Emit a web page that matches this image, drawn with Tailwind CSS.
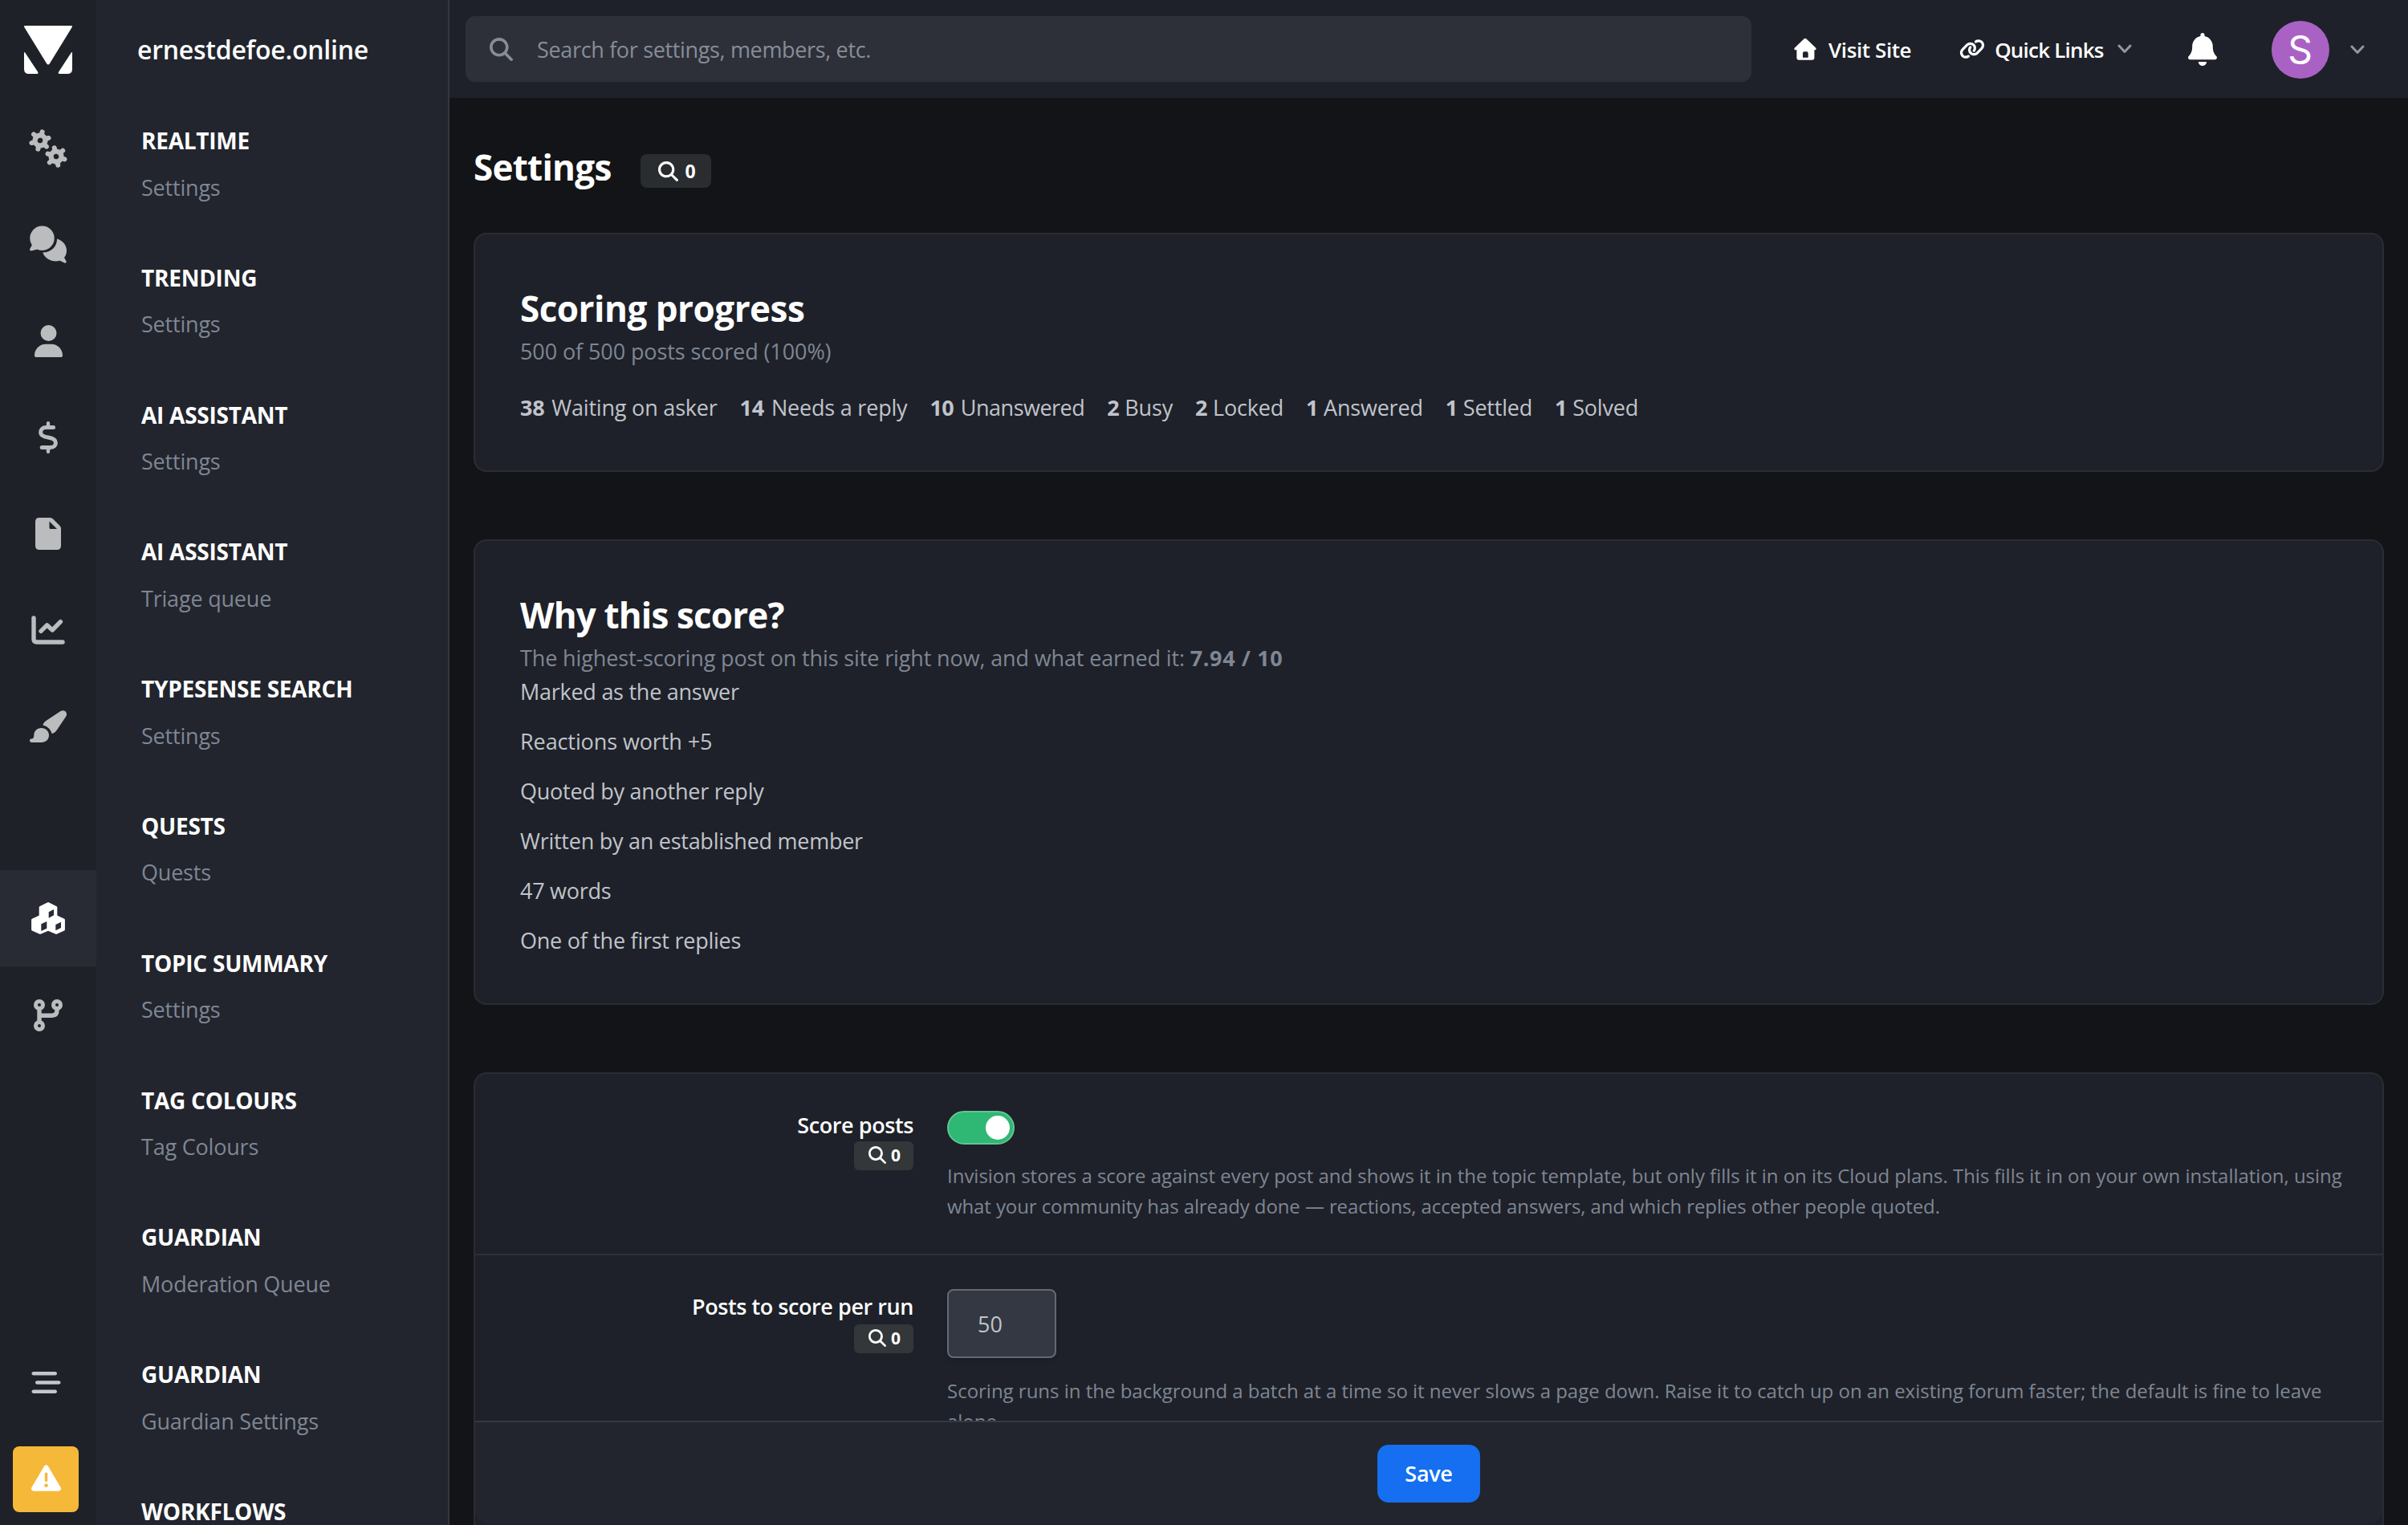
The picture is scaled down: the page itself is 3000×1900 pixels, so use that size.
<!DOCTYPE html>
<html lang="en">

<head>
    <meta charset="UTF-8">
    <meta name="viewport" content="width=device-width, initial-scale=1.0">
    <title>Settings - ernestdefoe.online</title>
    <script src="https://cdn.jsdelivr.net/npm/@tailwindcss/browser@4"></script>
</head>

<body class="bg-[#131417] font-['Open_Sans','Noto_Sans',sans-serif] text-[27px] leading-[42px] text-[#c0c4cb]">
    <!-- Shared icons -->
    <svg class="hidden" xmlns="http://www.w3.org/2000/svg">
        <symbol id="icon-search" viewBox="0 0 512 512">
            <path d="M416 208c0 45.9-14.9 88.3-40 122.7L502.6 457.4c12.5 12.5 12.5 32.8 0 45.3s-32.8 12.5-45.3 0L330.7 376c-34.4 25.2-76.8 40-122.7 40C93.1 416 0 322.9 0 208S93.1 0 208 0S416 93.1 416 208zM208 352a144 144 0 1 0 0-288 144 144 0 1 0 0 288z" />
        </symbol>
        <symbol id="icon-chevron" viewBox="0 0 18 12">
            <path d="M2 2l7 7.5L16 2" fill="none" stroke="currentColor" stroke-width="3" stroke-linecap="round" stroke-linejoin="round" />
        </symbol>
    </svg>

    <div class="flex h-[1900px] w-[3000px] overflow-hidden">
        <!-- Icon rail -->
        <nav class="flex w-[120px] shrink-0 flex-col bg-[#1e2128] text-[#bbbcbe]">
            <a href="#" class="flex h-[124px] shrink-0 items-center justify-center">
                <svg class="h-[60px] w-[60px]" viewBox="0 0 60 60" fill="#fff">
                    <path d="M1.2 0h57.6q1.6 0 1 1.8L32 47q-2 3-4 0L.2 1.8Q-.4 0 1.2 0z" />
                    <path d="M0 34q0-2 1.2-.4L17.4 58q.6 2-1 2H6q-6 0-6-6zM60 34q0-2-1.2-.4L42.8 58q-.6 2 1 2H54q6 0 6-6z" />
                </svg>
            </a>
            <a href="#" class="flex h-[120px] shrink-0 items-center justify-center pt-0.5">
                <svg class="h-[48px] w-[48px]" viewBox="0 0 48 48" fill="currentColor" stroke="currentColor" stroke-linecap="round">
                    <g transform="translate(14 14) rotate(14)">
                        <circle r="9.6" stroke="none" />
                        <path d="M0-11V11" stroke-width="6" />
                        <path d="M0-11V11" stroke-width="6" transform="rotate(60)" />
                        <path d="M0-11V11" stroke-width="6" transform="rotate(120)" />
                        <circle r="3.3" fill="#1e2128" stroke="none" />
                    </g>
                    <g transform="translate(34 34) rotate(-12)">
                        <circle r="9.6" stroke="none" />
                        <path d="M0-11V11" stroke-width="6" />
                        <path d="M0-11V11" stroke-width="6" transform="rotate(60)" />
                        <path d="M0-11V11" stroke-width="6" transform="rotate(120)" />
                        <circle r="3.3" fill="#1e2128" stroke="none" />
                    </g>
                </svg>
            </a>
            <a href="#" class="flex h-[120px] shrink-0 items-center justify-center pt-0.5">
                <svg class="h-[48px] w-[48px]" viewBox="0 0 48 48" fill="currentColor">
                    <circle cx="16.5" cy="15.8" r="15.2" />
                    <path d="M4.2 23.5L1.2 29.2Q.8 31.8 3.2 31.4L13 29z" />
                    <path d="M35 16.5C42 18.5 47 24.5 47 31c0 3.5-1 6.500-3 9l2.700 4.800q.3 2.200-1.900 1.900L38.500 43.800C30 46.500 20 41.800 17.200 33.500 27 33.800 35.300 26.500 35 16.500z" />
                </svg>
            </a>
            <a href="#" class="flex h-[120px] shrink-0 items-center justify-center pt-0.5">
                <svg class="h-[40px] w-[35px]" viewBox="0 0 448 512" fill="currentColor">
                    <path d="M224 256A128 128 0 1 0 224 0a128 128 0 1 0 0 256zm-45.700 48C79.800 304 0 383.800 0 482.300C0 498.700 13.300 512 29.700 512H418.300c16.400 0 29.700-13.300 29.700-29.700C448 383.800 368.200 304 269.700 304H178.300z" />
                </svg>
            </a>
            <a href="#" class="flex h-[120px] shrink-0 items-center justify-center pt-0.5">
                <svg class="h-[40px] w-[24px]" viewBox="0 0 24 40" fill="none" stroke="currentColor" stroke-linecap="round">
                    <path d="M12 2.300V7M12 33v4.700" stroke-width="4.400" />
                    <path d="M18.500 7.500H9.500C5.200 7.500 2.600 10.300 2.600 13.500c0 4.300 3.400 5.700 9.400 6.500 6.200.9 9.400 2.500 9.400 6.800 0 3.500-2.600 5.700-6.400 5.700H4.200" stroke-width="5" />
                </svg>
            </a>
            <a href="#" class="flex h-[120px] shrink-0 items-center justify-center pt-0.5">
                <svg class="h-[40px] w-[32px]" viewBox="0 0 32 40" fill="currentColor" fill-rule="evenodd">
                    <path d="M5 0H18.500q2 0 3.500 1.500L30.500 10Q32 11.500 32 13.500V35q0 5-5 5H5q-5 0-5-5V5Q0 0 5 0zM17.500 4.500v8q0 1.500 1.500 1.500h8z" />
                </svg>
            </a>
            <a href="#" class="flex h-[120px] shrink-0 items-center justify-center pt-0.5">
                <svg class="h-[36px] w-[42px]" viewBox="0 0 42 36" fill="none" stroke="currentColor" stroke-width="5.400" stroke-linecap="round" stroke-linejoin="round">
                    <path d="M3 3V29q0 4 4 4H39" />
                    <path d="M12 19.300L19.500 11.800 26.200 18 36.400 7.600" />
                </svg>
            </a>
            <a href="#" class="flex h-[120px] shrink-0 items-center justify-center pt-0.5">
                <svg class="h-[40px] w-[46px]" viewBox="0 0 46 40" fill="currentColor">
                    <path d="M38.500 1C42.500-1.500 48 2 45.300 7.500L33.500 25c-1.600 2.300-3.500 3.600-6 4C26.500 24.500 22.500 20 16.500 18.600c.3-2 1.500-3.800 3.500-5.300z" />
                    <path d="M14.500 22C20 22 24 26 24 31c0 5.200-4 9-9.300 9H2.500C-.8 40-.8 35.500 2 35.500c2.200 0 3.300-1.500 3.300-4.300C5.300 26 9 22 14.500 22z" />
                </svg>
            </a>
            <a href="#" class="mt-[120px] flex h-[120px] shrink-0 items-center justify-center bg-[#282b33] text-white">
                <svg class="h-[40px] w-[42px]" viewBox="0 0 42 40" fill="currentColor" stroke="currentColor" stroke-width="2.600" stroke-linejoin="round">
                    <path d="M21 1.500L31 6.500V18L21 22.500 11 18V6.500z" />
                    <path d="M11 17.500L20.500 22V34.500L11 38.600 1.400 34.200V22z" />
                    <path d="M31 17.500L40.600 22V34.200L31 38.600 21.500 34.500V22z" />
                    <path d="M21.700 12.300L28 9v7.300l-6.300 3.400zM12.300 27.300L19.300 24v8.700l-7 3.300zM30.300 28L37 24.700V32l-6.700 3.300z" fill="#282b33" stroke="none" />
                </svg>
            </a>
            <a href="#" class="flex h-[120px] shrink-0 items-center justify-center pt-0.5">
                <svg class="h-[40px] w-[36px]" viewBox="0 0 36 40" fill="none" stroke="currentColor" stroke-width="5">
                    <circle cx="7" cy="7" r="4.500" />
                    <circle cx="29" cy="7" r="4.500" />
                    <circle cx="7" cy="33" r="4.500" />
                    <path d="M7 11V29M7 20.200H22.500q6.500 0 6.500-6.500V11" stroke-width="5.400" />
                </svg>
            </a>
            <div class="mt-auto flex flex-col gap-[66px] pb-4 pl-4">
                <a href="#" class="pl-[23px]">
                    <svg class="h-[27px] w-[37px] text-[#c3c6cd]" viewBox="0 64 512 384" fill="currentColor">
                        <path d="M0 96C0 78.300 14.300 64 32 64H416c17.700 0 32 14.300 32 32s-14.300 32-32 32H32C14.300 128 0 113.700 0 96zM64 256c0-17.700 14.300-32 32-32H480c17.700 0 32 14.300 32 32s-14.300 32-32 32H96c-17.700 0-32-14.300-32-32zM448 416c0 17.700-14.300 32-32 32H32c-17.700 0-32-14.300-32-32s14.300-32 32-32H416c17.700 0 32 14.300 32 32z" />
                    </svg>
                </a>
                <button type="button" class="flex h-[82px] w-[82px] items-center justify-center rounded-lg bg-[#f5b839] pb-1 text-white">
                    <svg class="h-[37px] w-[37px]" viewBox="0 0 512 512" fill="currentColor">
                        <path d="M256 32c14.200 0 27.300 7.500 34.500 19.800l216 368c7.300 12.400 7.300 27.700 .2 40.100S486.300 480 472 480H40c-14.300 0-27.600-7.700-34.700-20.100s-7-27.800 .2-40.100l216-368C228.700 39.500 241.800 32 256 32zm0 128c-13.300 0-24 10.700-24 24V296c0 13.300 10.700 24 24 24s24-10.700 24-24V184c0-13.300-10.700-24-24-24zm32 224a32 32 0 1 0 -64 0 32 32 0 1 0 64 0z" />
                    </svg>
                </button>
            </div>
        </nav>

        <!-- Sub menu -->
        <aside class="flex w-[440px] shrink-0 flex-col border-r-2 border-[#33373e] bg-[#22252d]">
            <div class="flex h-[122px] shrink-0 items-center pt-0.5 pl-[51px] text-[32px] font-semibold tracking-[-0.25px] text-white">ernestdefoe.online</div>
            <ul class="flex flex-col gap-[74.3px] pt-[34px] pl-14 leading-[38px] tracking-[-0.2px] whitespace-nowrap text-[#7f8694] [&_h3]:mb-[20.5px] [&_h3]:text-[28px] [&_h3]:font-bold [&_h3]:tracking-[-0.25px] [&_h3]:text-white [&_h3]:uppercase">
                <li>
                    <h3>Realtime</h3>
                    <a href="#" class="block">Settings</a>
                </li>
                <li>
                    <h3>Trending</h3>
                    <a href="#" class="block">Settings</a>
                </li>
                <li>
                    <h3>AI Assistant</h3>
                    <a href="#" class="block">Settings</a>
                </li>
                <li>
                    <h3>AI Assistant</h3>
                    <a href="#" class="block">Triage queue</a>
                </li>
                <li>
                    <h3>Typesense Search</h3>
                    <a href="#" class="block">Settings</a>
                </li>
                <li>
                    <h3>Quests</h3>
                    <a href="#" class="block">Quests</a>
                </li>
                <li>
                    <h3>Topic Summary</h3>
                    <a href="#" class="block">Settings</a>
                </li>
                <li>
                    <h3>Tag Colours</h3>
                    <a href="#" class="block">Tag Colours</a>
                </li>
                <li>
                    <h3>Guardian</h3>
                    <a href="#" class="block">Moderation Queue</a>
                </li>
                <li>
                    <h3>Guardian</h3>
                    <a href="#" class="block">Guardian Settings</a>
                </li>
                <li>
                    <h3>Workflows</h3>
                </li>
            </ul>
        </aside>

        <div class="flex w-[2440px] flex-col">
            <!-- Top bar -->
            <header class="flex h-[122px] shrink-0 items-center bg-[#1e2129] pl-5 text-[26px] font-semibold whitespace-nowrap text-white">
                <div class="flex h-[82px] w-[1602px] items-center gap-[30px] rounded-xl bg-[#2d3039] pl-[30px] font-normal text-[#878d98]">
                    <svg class="h-[29px] w-[29px]" fill="currentColor"><use href="#icon-search" /></svg>
                    <span class="pt-0.5 text-[27px] tracking-[-0.34px]">Search for settings, members, etc.</span>
                </div>
                <a href="#" class="ml-[53px] flex items-center gap-[15px] tracking-[-0.4px]">
                    <svg class="h-[28px] w-[28px]" viewBox="0 0 28 28" fill="currentColor" fill-rule="evenodd">
                        <path d="M12.700 1.200q1.300-1 2.600 0L27 12.500q1.500 1.800-.3 2.700H25.400V25q0 2.800-2.800 2.800H6.200Q3.400 27.800 3.400 25V15.200H1.300Q-.5 14.300 1 12.500zM13 17.300q-2 0-2 2V24.700h6.700V19.300q0-2-2-2z" />
                    </svg>
                    <span class="pt-0.5">Visit Site</span>
                </a>
                <a href="#" class="ml-[60px] flex items-center tracking-[-0.8px]">
                    <svg class="mr-[12px] h-[26px] w-[32px]" viewBox="0 0 640 512" fill="currentColor">
                        <path d="M579.800 267.700c56.500-56.500 56.500-148 0-204.500c-50-50-128.800-56.500-186.300-15.400l-1.600 1.100c-14.400 10.300-17.700 30.300-7.400 44.600s30.300 17.700 44.600 7.400l1.600-1.100c32.100-22.900 76-19.300 103.800 8.600c31.500 31.500 31.500 82.500 0 114L422.300 334.800c-31.500 31.500-82.500 31.500-114 0c-27.900-27.900-31.500-71.800-8.600-103.800l1.100-1.600c10.300-14.400 6.900-34.400-7.400-44.600s-34.400-6.900-44.600 7.400l-1.100 1.600C206.500 251.200 213 330 263 380c56.500 56.500 148 56.500 204.500 0L579.800 267.700zM60.200 244.300c-56.500 56.500-56.500 148 0 204.500c50 50 128.800 56.500 186.300 15.400l1.600-1.100c14.400-10.300 17.700-30.300 7.400-44.600s-30.300-17.700-44.600-7.400l-1.600 1.100c-32.100 22.900-76 19.300-103.800-8.600C74 372 74 321 105.500 289.500L217.700 177.200c31.500-31.500 82.500-31.500 114 0c27.900 27.900 31.500 71.800 8.600 103.900l-1.100 1.600c-10.300 14.400-6.900 34.400 7.400 44.600s34.400 6.900 44.600-7.400l1.100-1.600C433.500 260.800 427 182 377 132c-56.500-56.500-148-56.500-204.500 0L60.200 244.300z" />
                    </svg>
                    <span class="pt-0.5">Quick Links</span>
                    <svg class="ml-[17px] h-[12px] w-[18px] text-[#95979b]"><use href="#icon-chevron" /></svg>
                </a>
                <a href="#" class="ml-[70px]">
                    <svg class="h-[41px] w-[36px]" viewBox="0 0 448 512" fill="currentColor">
                        <path d="M224 0c-17.700 0-32 14.300-32 32V51.200C119 66 64 130.600 64 208v18.800c0 47-17.300 92.400-48.500 127.600l-7.400 8.300c-8.400 9.400-10.400 22.900-5.300 34.400S19.400 416 32 416H416c12.600 0 24-7.400 29.200-18.900s3.100-25-5.300-34.400l-7.400-8.300C401.300 319.200 384 273.900 384 226.800V208c0-77.400-55-142-128-156.800V32c0-17.700-14.300-32-32-32zm45.300 493.300c12-12 18.700-28.300 18.700-45.300H224 160c0 17 6.700 33.300 18.700 45.300s28.300 18.700 45.300 18.700s33.300-6.700 45.300-18.700z" />
                    </svg>
                </a>
                <a href="#" class="ml-[68px] flex items-center gap-[26px] pt-0.5">
                    <span class="flex h-[72px] w-[72px] items-center justify-center rounded-full bg-[#a962c4] font-['Inter',sans-serif] text-[48px] font-normal">S</span>
                    <svg class="h-[12px] w-[18px] text-[#95979b]"><use href="#icon-chevron" /></svg>
                </a>
            </header>

            <main class="flex flex-1 flex-col px-[30px]">
                <div class="flex h-[168px] shrink-0 items-start gap-[36px] pt-[55px]">
                    <h1 class="text-[44px] leading-[62px] font-bold tracking-[-0.75px] text-white">Settings</h1>
                    <span class="mt-[15px] flex h-[42px] w-[88px] items-center justify-center gap-2 rounded-lg bg-[#2a2d2f] pl-1 text-[23px] font-bold text-white">
                        <svg class="h-[25px] w-[25px]" fill="currentColor"><use href="#icon-search" /></svg>
                        0
                    </span>
                </div>

                <section class="h-[298px] shrink-0 rounded-2xl border-2 border-[#292d33] bg-[#1e2129] px-14 pt-[62px]">
                    <h2 class="text-[44px] leading-[60px] font-bold tracking-[-0.5px] text-white">Scoring progress</h2>
                    <p class="mt-[3px] tracking-[-0.1px] text-[#7f8694]">500 of 500 posts scored (100%)</p>
                    <div class="mt-7 flex gap-7 tracking-[-0.2px]">
                        <span><b class="mr-[2px]">38</b> Waiting on asker</span>
                        <span><b class="mr-[2px]">14</b> Needs a reply</span>
                        <span class="tracking-[-0.5px]"><b class="mr-[2px]">10</b> Unanswered</span>
                        <span><b>2</b> Busy</span>
                        <span><b>2</b> Locked</span>
                        <span><b>1</b> Answered</span>
                        <span><b>1</b> Settled</span>
                        <span><b>1</b> Solved</span>
                    </div>
                </section>

                <section class="mt-[84px] h-[580px] shrink-0 rounded-2xl border-2 border-[#292d33] bg-[#1e2129] px-14 pt-[62px]">
                    <h2 class="text-[44px] leading-[60px] font-bold tracking-[-0.85px] text-white">Why this score?</h2>
                    <p class="mt-[3px] tracking-[-0.13px] text-[#7f8694]">The highest-scoring post on this site right now, and what earned it: <b class="tracking-[0.6px]">7.94 / 10</b></p>
                    <ul class="flex flex-col gap-5 tracking-[-0.26px]">
                        <li>Marked as the answer</li>
                        <li class="tracking-[-0.1px]">Reactions worth +5</li>
                        <li>Quoted by another reply</li>
                        <li>Written by an established member</li>
                        <li>47 words</li>
                        <li>One of the first replies</li>
                    </ul>
                </section>

                <form class="mt-[84px] flex h-[564px] shrink-0 flex-col rounded-t-2xl border-2 border-b-0 border-[#292d33] bg-[#1e2129]">
                    <div class="h-[432px] overflow-hidden">
                        <div class="flex h-[226px] gap-[42px] border-b-2 border-[#2c3037]">
                            <div class="flex w-[546px] flex-col items-end pt-[43px]">
                                <label class="font-semibold tracking-[-0.4px] text-white">Score posts</label>
                                <span class="-mt-px flex h-9 w-[74px] items-center justify-center gap-1.5 rounded-md bg-[#333739] pb-0.5 pl-0.5 text-[21px] font-bold text-white">
                                    <svg class="h-[22px] w-[22px]" fill="currentColor"><use href="#icon-search" /></svg>
                                    0
                                </span>
                            </div>
                            <div class="w-[1770px] pt-[46px]">
                                <div class="flex h-[42px] w-[84px] items-center justify-end rounded-full border-2 border-[#62c596] bg-[#2fb774] pr-1">
                                    <span class="h-[30px] w-[30px] rounded-full bg-white"></span>
                                </div>
                                <p class="mt-5 text-[24px] leading-[38px] tracking-[-0.02px] whitespace-nowrap text-[#7f8694]">Invision stores a score against every post and shows it in the topic template, but only fills it in on its Cloud plans. This fills it in on your own installation, using<br><span class="tracking-[-0.1px]">what your community has already done — reactions, accepted answers, and which replies other people quoted.</span></p>
                            </div>
                        </div>
                        <div class="flex gap-[42px]">
                            <div class="flex w-[546px] flex-col items-end pt-[43px]">
                                <label class="font-semibold tracking-[-0.43px] text-white">Posts to score per run</label>
                                <span class="mt-px flex h-9 w-[74px] items-center justify-center gap-1.5 rounded-md bg-[#333739] pb-0.5 pl-0.5 text-[21px] font-bold text-white">
                                    <svg class="h-[22px] w-[22px]" fill="currentColor"><use href="#icon-search" /></svg>
                                    0
                                </span>
                            </div>
                            <div class="w-[1770px] pt-[42px]">
                                <div class="flex h-[86px] w-[136px] items-center rounded-lg border-2 border-[#666974] bg-[#343842] pt-0.5 pl-9 shadow-md">50</div>
                                <p class="mt-[22px] text-[24px] leading-[38px] tracking-[-0.01px] whitespace-nowrap text-[#7f8694]">Scoring runs in the background a batch at a time so it never slows a page down. Raise it to catch up on an existing forum faster; the default is fine to leave<br>alone.</p>
                            </div>
                        </div>
                    </div>
                    <div class="flex h-[128px] items-start justify-center rounded-b-2xl border-t-2 border-[#353942] bg-[#22252d] pt-7">
                        <button type="button" class="flex h-[72px] w-[128px] items-center justify-center rounded-[14px] bg-[#156ff0] font-semibold tracking-[-0.3px] text-white">Save</button>
                    </div>
                </form>
            </main>
        </div>
    </div>
</body>

</html>
